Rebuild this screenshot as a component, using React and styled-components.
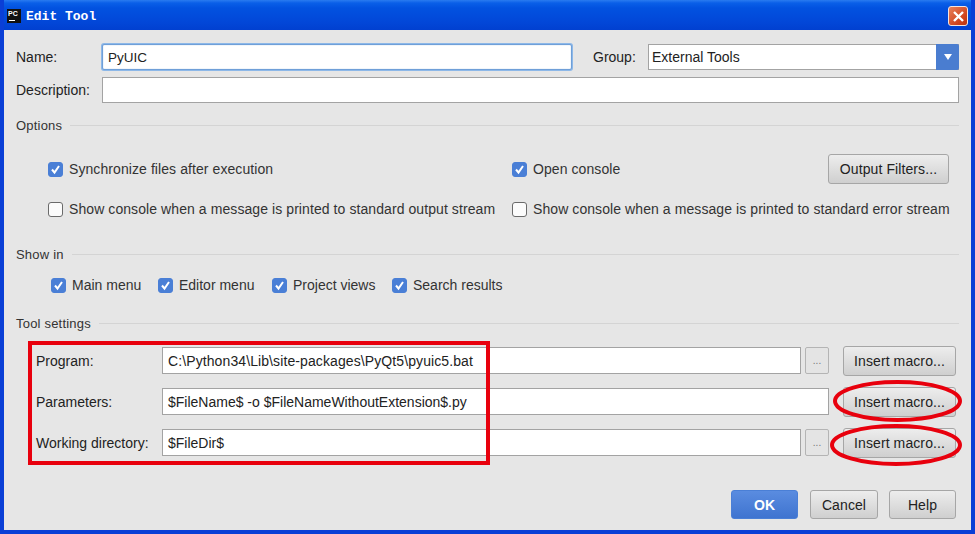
import React from "react";
import styled, { createGlobalStyle } from "styled-components";

const GlobalStyle = createGlobalStyle`
  html, body {
    margin: 0;
    padding: 0;
    background: #0a3fd6;
  }
  * {
    box-sizing: border-box;
  }
`;

const StyledWindow = styled.div`
  width: 975px;
  height: 534px;
  display: flex;
  flex-direction: column;
  overflow: hidden;
  border: solid #0a3fd6;
  border-width: 0 4px 4px 4px;
  font-family: "Liberation Sans", Arial, sans-serif;
  font-size: 14px;
  color: #222;
`;

const StyledTitleBar = styled.div`
  height: 30px;
  flex: none;
  margin: 0 -4px;
  padding: 2px 7px 0 7px;
  display: flex;
  align-items: center;
  background: linear-gradient(180deg, #2a7bf0 0, #0a5fe8 3px, #0252e0 8px, #0247d8 22px, #0140d0 100%);
`;

const StyledAppIcon = styled.div`
  width: 14px;
  height: 14px;
  background: #111;
  color: #fff;
  font-size: 7px;
  font-weight: bold;
  line-height: 9px;
  padding-left: 1px;
  position: relative;
  &::after {
    content: "";
    position: absolute;
    left: 2px;
    bottom: 2px;
    width: 6px;
    height: 1px;
    background: #fff;
  }
`;

const StyledTitle = styled.div`
  margin-left: 5px;
  flex: 1;
  font-family: "Liberation Mono", monospace;
  font-weight: bold;
  font-size: 13px;
  color: #fff;
`;

const StyledClose = styled.div`
  width: 20px;
  height: 20px;
  border: 1px solid #f4e4de;
  border-radius: 3px;
  background: linear-gradient(135deg, #e8825c, #d0431c 70%, #b9340f);
  display: flex;
  align-items: center;
  justify-content: center;
`;

const StyledBody = styled.div`
  flex: 1;
  background: #e6e6e6;
  padding: 14px 12px 0 12px;
  display: flex;
  flex-direction: column;
`;

const StyledRow = styled.div`
  display: flex;
  align-items: center;
  height: 26px;
  margin-bottom: ${({ $gap }) => $gap || 0}px;
`;

const StyledLabel = styled.div`
  width: ${({ $width }) => $width}px;
  flex: none;
`;

const StyledInput = styled.div`
  flex: ${({ $width }) => ($width ? "none" : 1)};
  width: ${({ $width }) => ($width ? `${$width}px` : "auto")};
  height: ${({ $height }) => $height || 26}px;
  background: #fff;
  border: 1px solid #a3a3a3;
  padding: 0 5px;
  display: flex;
  align-items: center;
  white-space: nowrap;
  color: #222;
  letter-spacing: ${({ $spacing }) => $spacing || 0}px;
  ${({ $focused }) =>
    $focused &&
    `
    border-color: #6f9fd8;
    box-shadow: 0 0 0 1px #8db8e8, inset 0 0 1px #6f9fd8;
    border-radius: 2px;
    font-size: 13.5px;
  `}
`;

const StyledGroupLabel = styled.div`
  width: 55px;
  margin-left: 21px;
  flex: none;
`;

const StyledCombo = styled(StyledInput)`
  padding: 0 0 0 3px;
  justify-content: space-between;
`;

const StyledComboArrow = styled.div`
  width: 23px;
  height: 26px;
  margin-right: -1px;
  background: #4a7dd0;
  border-radius: 0 2px 2px 0;
  display: flex;
  align-items: center;
  justify-content: center;
  &::after {
    content: "";
    border: solid transparent;
    border-width: 6px 4.5px 0 4.5px;
    border-top-color: #fff;
  }
`;

const StyledSectionTitle = styled.div`
  display: flex;
  align-items: center;
  height: 16px;
  margin-top: ${({ $top }) => $top}px;
  color: #333;
  font-size: 13px;
  letter-spacing: 0.2px;
  &::after {
    content: "";
    flex: 1;
    height: 1px;
    margin-left: 8px;
    background: #d4d4d4;
  }
`;

const StyledCheckGrid = styled.div`
  display: grid;
  grid-template-columns: 464px 316px 1fr;
  padding-left: 32px;
  margin-top: ${({ $top }) => $top}px;
  grid-auto-rows: 30px;
  row-gap: 10px;
  align-items: center;
  letter-spacing: 0.08px;
`;

const StyledCheckField = styled.div`
  display: flex;
  align-items: center;
  gap: 6px;
  white-space: nowrap;
  font-size: 14px;
  color: #333;
`;

const StyledBox = styled.div`
  width: 15px;
  height: 15px;
  flex: none;
  border-radius: 3px;
  display: flex;
  align-items: center;
  justify-content: center;
  background: ${({ $checked }) => ($checked ? "#4a7fd6" : "#fbfbfb")};
  border: 1px solid ${({ $checked }) => ($checked ? "#4a7fd6" : "#6a6a6a")};
`;

const StyledShowRow = styled.div`
  display: flex;
  padding-left: 35px;
  margin-top: 15px;
  height: 16px;
  align-items: center;
`;

const StyledShowItem = styled.div`
  width: ${({ $width }) => $width}px;
  flex: none;
`;

const StyledButton = styled.div`
  width: ${({ $width }) => $width}px;
  height: ${({ $height }) => $height || 30}px;
  flex: none;
  display: flex;
  align-items: center;
  justify-content: center;
  border: 1px solid #a6a6a6;
  border-radius: 3px;
  background: linear-gradient(180deg, #ededed, #cfcfcf);
  color: #222;
  font-size: 14px;
  letter-spacing: 0.1px;
`;

const StyledPrimaryButton = styled(StyledButton)`
  border-color: #4a7fd6;
  background: linear-gradient(180deg, #5a8ce0, #3f74d0);
  color: #fff;
  font-weight: bold;
  margin-right: 1px;
`;

const StyledBrowse = styled.div`
  width: 24px;
  height: 27px;
  margin-left: 4px;
  flex: none;
  border: 1px solid #b4b4b4;
  border-radius: 2px;
  background: #e4e4e4;
  color: #777;
  font-size: 10px;
  display: flex;
  align-items: center;
  justify-content: center;
`;

const StyledSettings = styled.div`
  position: relative;
  margin-top: 16px;
  padding: 0 3px 0 20px;
  display: flex;
  flex-direction: column;
  gap: 14px;
`;

const StyledToolRow = styled.div`
  display: flex;
  align-items: center;
  height: 27px;
`;

const StyledMacro = styled(StyledButton)`
  margin-left: 14px;
`;

const StyledHighlightBox = styled.div`
  position: absolute;
  left: 12px;
  top: -6px;
  width: 462px;
  height: 124px;
  border: 4px solid #e8000d;
  pointer-events: none;
`;

const StyledOval = styled.svg`
  position: absolute;
  left: ${({ $left }) => $left}px;
  top: ${({ $top }) => $top}px;
  pointer-events: none;
`;

const StyledFooter = styled.div`
  margin-top: 34px;
  padding-right: 3px;
  display: flex;
  justify-content: flex-end;
  gap: 11px;
`;

const CheckMark = () => (
  <svg width="11" height="11" viewBox="0 0 11 11">
    <path d="M2 5.5 L4.5 8.5 L9 2" fill="none" stroke="#fff" strokeWidth="2" />
  </svg>
);

const Check = ({ checked, label }) => (
  <StyledCheckField>
    <StyledBox $checked={checked}>{checked && <CheckMark />}</StyledBox>
    {label}
  </StyledCheckField>
);

const Oval = ({ left, top, width, height }) => (
  <StyledOval $left={left} $top={top} width={width} height={height}>
    <ellipse
      cx={width / 2}
      cy={height / 2}
      rx={width / 2 - 2}
      ry={height / 2 - 2}
      fill="none"
      stroke="#e8000d"
      strokeWidth="4"
    />
  </StyledOval>
);

const App = () => {
  return (
    <StyledWindow>
      <GlobalStyle />
      <StyledTitleBar>
        <StyledAppIcon>PC</StyledAppIcon>
        <StyledTitle>Edit Tool</StyledTitle>
        <StyledClose>
          <svg width="13" height="13" viewBox="0 0 13 13">
            <path d="M2 2 L11 11 M11 2 L2 11" stroke="#fff" strokeWidth="2.4" />
          </svg>
        </StyledClose>
      </StyledTitleBar>
      <StyledBody>
        <StyledRow $gap={7}>
          <StyledLabel $width={86}>Name:</StyledLabel>
          <StyledInput $width={470} $focused>PyUIC</StyledInput>
          <StyledGroupLabel>Group:</StyledGroupLabel>
          <StyledCombo>
            External Tools
            <StyledComboArrow />
          </StyledCombo>
        </StyledRow>
        <StyledRow>
          <StyledLabel $width={86}>Description:</StyledLabel>
          <StyledInput />
        </StyledRow>

        <StyledSectionTitle $top={14}>Options</StyledSectionTitle>
        <StyledCheckGrid $top={21}>
          <Check checked label="Synchronize files after execution" />
          <Check checked label="Open console" />
          <StyledButton $width={121}>Output Filters...</StyledButton>
          <Check label="Show console when a message is printed to standard output stream" />
          <Check label="Show console when a message is printed to standard error stream" />
        </StyledCheckGrid>

        <StyledSectionTitle $top={22}>Show in</StyledSectionTitle>
        <StyledShowRow>
          <StyledShowItem $width={107}><Check checked label="Main menu" /></StyledShowItem>
          <StyledShowItem $width={114}><Check checked label="Editor menu" /></StyledShowItem>
          <StyledShowItem $width={120}><Check checked label="Project views" /></StyledShowItem>
          <StyledShowItem $width={130}><Check checked label="Search results" /></StyledShowItem>
        </StyledShowRow>

        <StyledSectionTitle $top={22}>Tool settings</StyledSectionTitle>
        <StyledSettings>
          <StyledToolRow>
            <StyledLabel $width={126}>Program:</StyledLabel>
            <StyledInput $height={27} $spacing={0.1}>C:\Python34\Lib\site-packages\PyQt5\pyuic5.bat</StyledInput>
            <StyledBrowse>...</StyledBrowse>
            <StyledMacro $width={113}>Insert macro...</StyledMacro>
          </StyledToolRow>
          <StyledToolRow>
            <StyledLabel $width={126}>Parameters:</StyledLabel>
            <StyledInput $height={27}>$FileName$ -o $FileNameWithoutExtension$.py</StyledInput>
            <StyledMacro $width={113}>Insert macro...</StyledMacro>
          </StyledToolRow>
          <StyledToolRow>
            <StyledLabel $width={126}>Working directory:</StyledLabel>
            <StyledInput $height={27}>$FileDir$</StyledInput>
            <StyledBrowse>...</StyledBrowse>
            <StyledMacro $width={113}>Insert macro...</StyledMacro>
          </StyledToolRow>
          <StyledHighlightBox />
          <Oval left={817} top={33} width={129} height={42} />
          <Oval left={814} top={77} width={132} height={42} />
        </StyledSettings>

        <StyledFooter>
          <StyledPrimaryButton $width={67} $height={29}>OK</StyledPrimaryButton>
          <StyledButton $width={68} $height={29}>Cancel</StyledButton>
          <StyledButton $width={67} $height={29}>Help</StyledButton>
        </StyledFooter>
      </StyledBody>
    </StyledWindow>
  );
};

export default App;
